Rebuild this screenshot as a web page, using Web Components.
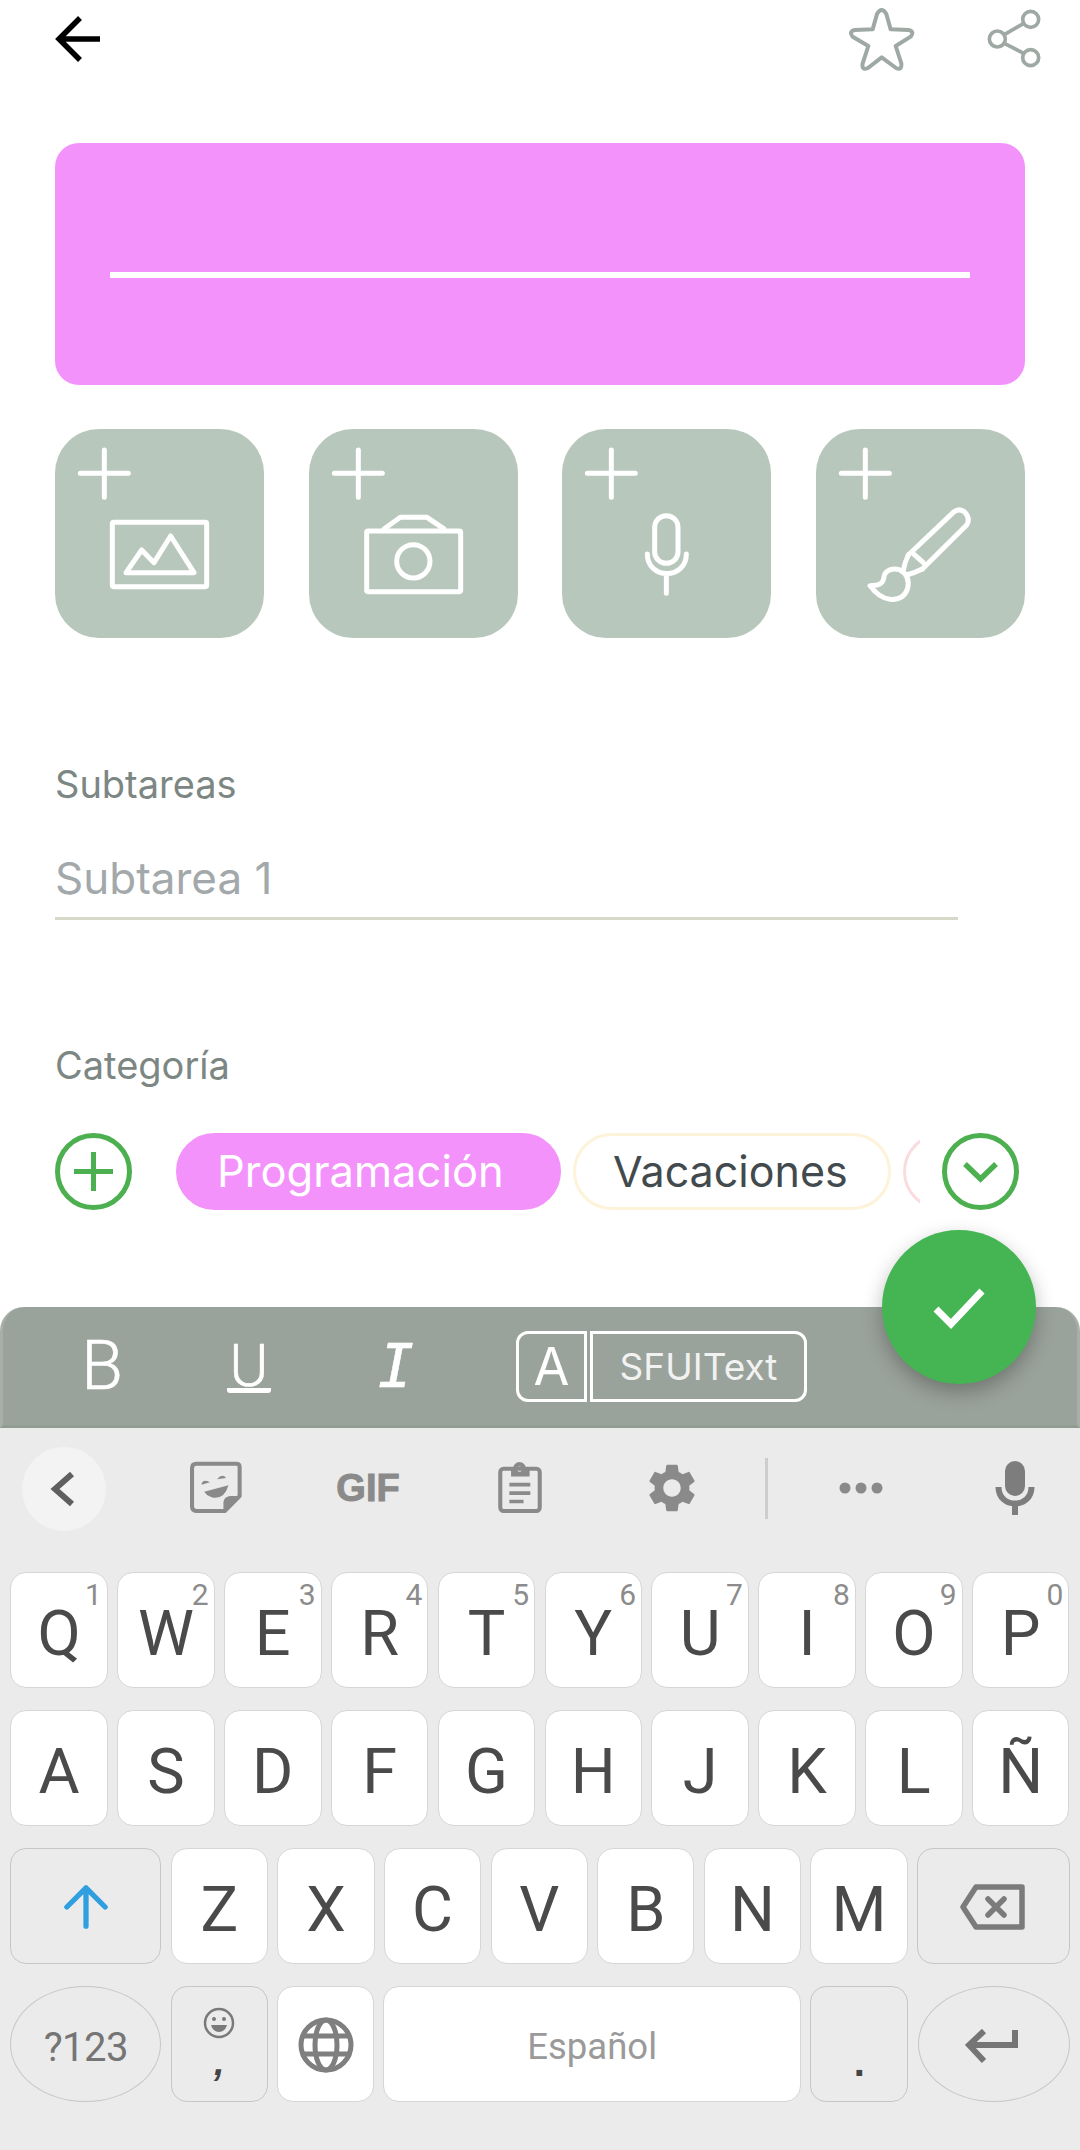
<!DOCTYPE html>
<html lang="es">
<head>
<meta charset="utf-8">
<title>Tarea</title>
<style>
	html, body { margin: 0; padding: 0; background: #fff; }
	body { position: relative; width: 1080px; height: 2150px; overflow: hidden; font-family: Inter, "Liberation Sans", sans-serif; }
</style>
</head>
<body>
<app-bar></app-bar>
<title-card></title-card>
<media-row>
	<media-tile kind="image"></media-tile>
	<media-tile kind="camera"></media-tile>
	<media-tile kind="mic"></media-tile>
	<media-tile kind="brush"></media-tile>
</media-row>
<form-label style="margin-top:124px">Subtareas</form-label>
<sub-field>Subtarea 1</sub-field>
<form-label style="margin-top:123px">Categoría</form-label>
<category-row>
	<cat-chip selected style="width:385px">Programación</cat-chip>
	<cat-chip tone="#fdf3d9" style="width:317.5px;padding-left:37px;font-size:43px">Vacaciones</cat-chip>
	<cat-chip tone="#fadcdf" style="width:200px"></cat-chip>
</category-row>
<format-bar></format-bar>
<done-fab></done-fab>
<kb-tools></kb-tools>
<kb-keys></kb-keys>

<script>
class AppBar extends HTMLElement {
	constructor() {
		super()
		this.root = this.attachShadow({ mode: 'open' })
		this.root.innerHTML = `
			<style>
			:host { display: flex; height: 138px; padding: 5px 35px 0 50px; align-items: flex-start; }
			svg { display: block; fill: none; }
			.star { margin-left: auto; margin-right: 70px; }
			</style>
			<svg width="60" height="70" viewBox="0 0 60 70" stroke="#000" stroke-width="5.5">
				<path d="M30 13 L9 34 L30 55 M9 34 H50"/>
			</svg>
			<svg class="star" width="70" height="70" viewBox="15 15 210 210" stroke="#9fa9a4" stroke-width="12" stroke-linejoin="round">
				<path d="M111 42 Q125 18 139 42 L152 88 L205 90 Q225 94 212 110 L167 138 L184 190 Q186 212 168 204 L125 172 L84 204 Q64 212 68 190 L85 138 L38 110 Q25 94 45 90 L98 88 Z"/>
			</svg>
			<svg width="60" height="70" viewBox="435 15 180 210" stroke="#9fa9a4" stroke-width="11">
				<circle cx="572" cy="58" r="24"/>
				<circle cx="472" cy="117" r="24"/>
				<circle cx="572" cy="173" r="24"/>
				<path d="M493 104 L551 70 M493 130 L551 160"/>
			</svg>
		`
	}
}

class TitleCard extends HTMLElement {
	constructor() {
		super()
		this.root = this.attachShadow({ mode: 'open' })
		this.root.innerHTML = `
			<style>
			:host { display: flex; align-items: center; margin: 0 55px; height: 242px; padding: 0 55px; box-sizing: border-box; background: #f492fb; border-radius: 24px; }
			div { flex: 1; height: 6px; margin-top: 22px; background: #fff; }
			</style>
			<div></div>
		`
	}
}

class MediaRow extends HTMLElement {
	constructor() {
		super()
		this.root = this.attachShadow({ mode: 'open' })
		this.root.innerHTML = `
			<style>
			:host { display: flex; justify-content: space-between; margin: 44px 55px 0; }
			</style>
			<slot></slot>
		`
	}
}

// artwork is in the coordinates of the zoomed crops, the viewBox picks out the tile
const tileArt = {
	image: { box: '45 27 627 627', plus: 193, art: `
		<rect x="217" y="307" width="283" height="193" rx="4"/>
		<path d="M258 458 L305 390 L342 428 L392 348 L462 458 Z"/>` },
	camera: { box: '806 27 627 627', plus: 954, art: `
		<rect x="979" y="333" width="282" height="182" rx="4"/>
		<path d="M1032 326 L1080 292 H1160 L1210 326"/>
		<circle cx="1119" cy="424" r="50"/>` },
	mic: { box: '67 27 627 627', plus: 215, art: `
		<rect x="345" y="287" width="70" height="143" rx="35"/>
		<path d="M323 402 C323 480 440 480 440 402 M380 462 V520"/>` },
	brush: { box: '828 27 627 627', plus: 976, art: `
		<path d="M1105 405 L1240 277 Q1258 262 1275 277 Q1292 297 1280 315 L1147 447"/>
		<path d="M1105 405 Q1095 425 1090 450 M1147 447 Q1125 458 1100 465 M1122 403 L1150 428"/>
		<path d="M990 497 C1010 497 1030 495 1032 470 C1035 450 1060 442 1080 450 C1100 460 1108 480 1103 505 C1095 530 1075 540 1050 538 C1025 535 1005 518 990 497 Z"/>` }
}

class MediaTile extends HTMLElement {
	constructor() {
		super()
		this.root = this.attachShadow({ mode: 'open' })
		const t = tileArt[this.getAttribute('kind')]
		this.root.innerHTML = `
			<style>
			:host { display: block; width: 209px; height: 209px; background: #b8c7bc; border-radius: 44px; }
			svg { display: block; fill: none; stroke: #fff; stroke-width: 15; stroke-linecap: round; stroke-linejoin: round; }
			</style>
			<svg width="209" height="209" viewBox="${t.box}">
				<path d="M${t.plus} 90 V232 M${t.plus - 72} 160 H${t.plus + 72}"/>
				${t.art}
			</svg>
		`
	}
}

class FormLabel extends HTMLElement {
	constructor() {
		super()
		this.root = this.attachShadow({ mode: 'open' })
		this.root.innerHTML = `
			<style>
			:host { display: block; margin-left: 55px; font: 400 38px/44px Inter, "Liberation Sans", sans-serif; color: #7c8682; }
			</style>
			<slot></slot>
		`
	}
}

class SubField extends HTMLElement {
	constructor() {
		super()
		this.root = this.attachShadow({ mode: 'open' })
		this.root.innerHTML = `
			<style>
			:host { display: block; margin: 47px 122px 0 55px; padding-bottom: 14px; border-bottom: 3px solid #d6d8c8; font: 400 44px/50px Inter, "Liberation Sans", sans-serif; color: #a3a8aa; }
			</style>
			<slot></slot>
		`
	}
}

class CategoryRow extends HTMLElement {
	constructor() {
		super()
		this.root = this.attachShadow({ mode: 'open' })
		this.root.innerHTML = `
			<style>
			:host { display: flex; align-items: center; margin: 46px 61px 0 55px; height: 77px; }
			svg { display: block; flex: none; fill: none; stroke: #4caf50; stroke-width: 5; }
			.list { flex: 1; display: flex; gap: 12px; margin: 0 22px 0 44px; overflow: hidden; }
			</style>
			<svg width="77" height="77" viewBox="0 0 77 77">
				<circle cx="38.5" cy="38.5" r="36"/>
				<path d="M38.5 19 V58 M19 38.5 H58"/>
			</svg>
			<div class="list"><slot></slot></div>
			<svg width="77" height="77" viewBox="0 0 77 77">
				<circle cx="38.5" cy="38.5" r="36"/>
				<path d="M23 31 L38.5 46 L54 31" stroke-width="5.5"/>
			</svg>
		`
	}
}

class CatChip extends HTMLElement {
	constructor() {
		super()
		this.root = this.attachShadow({ mode: 'open' })
		const tone = this.getAttribute('tone') || '#f492fb'
		this.root.innerHTML = `
			<style>
			:host { display: flex; flex: none; align-items: center; height: 77px; box-sizing: border-box; padding: 0 0 0 38px; border: 3px solid ${tone}; border-radius: 39px; font: 400 43.5px/1 Inter, "Liberation Sans", sans-serif; color: #424a4d; white-space: nowrap; }
			:host([selected]) { background: #f492fb; color: #fff; }
			</style>
			<slot></slot>
		`
	}
}

class FormatBar extends HTMLElement {
	constructor() {
		super()
		this.root = this.attachShadow({ mode: 'open' })
		this.root.innerHTML = `
			<style>
			:host { display: flex; align-items: center; margin-top: 97px; height: 121px; box-sizing: border-box; padding: 0 0 0 59px; background: #9aa39b; border: 3px solid #a7afa8; border-top: 0; border-bottom-color: #919c93; border-radius: 24px 24px 0 0; color: #fff; font-family: Inter, "Liberation Sans", sans-serif; }
			.fmt { width: 80px; text-align: center; margin-right: 67px; font: 300 68px/80px Roboto, "Liberation Sans", sans-serif; -webkit-text-stroke: .6px #fff; }
			.u { font-size: 59px; }
			.u span { display: inline-block; border-bottom: 5px solid #fff; border-radius: 3px; padding: 0 3px; line-height: 44px; }
			.i { font: oblique 400 60px/80px "DejaVu Sans Mono", monospace; }
			.a, .name { height: 71px; box-sizing: border-box; border: 3px solid #fff; display: flex; align-items: center; justify-content: center; }
			.a { width: 71px; margin-left: 13px; border-radius: 12px 0 0 12px; font-size: 52px; }
			.name { width: 217px; margin-left: 3px; border-radius: 0 12px 12px 0; font-size: 37px; color: #f2f2f2; }
			</style>
			<div class="fmt">B</div>
			<div class="fmt u"><span>U</span></div>
			<div class="fmt i">I</div>
			<div class="a">A</div>
			<div class="name">SFUIText</div>
		`
	}
}

class DoneFab extends HTMLElement {
	constructor() {
		super()
		this.root = this.attachShadow({ mode: 'open' })
		this.root.innerHTML = `
			<style>
			:host { position: absolute; left: 882px; top: 1230px; width: 154px; height: 154px; border-radius: 50%; background: #45b553; box-shadow: 0 8px 20px rgba(0,0,0,.28); display: flex; align-items: center; justify-content: center; }
			svg { display: block; fill: none; stroke: #fff; stroke-width: 7; }
			</style>
			<svg width="154" height="154" viewBox="0 0 154 154">
				<path d="M54 79 L69 94 L100 61"/>
			</svg>
		`
	}
}

class KbTools extends HTMLElement {
	constructor() {
		super()
		this.root = this.attachShadow({ mode: 'open' })
		this.root.innerHTML = `
			<style>
			:host { display: flex; align-items: center; height: 144px; padding: 0 0 24px 22px; background: #ebebeb; box-sizing: border-box; }
			svg { display: block; flex: none; }
			.back { width: 84px; height: 84px; border-radius: 50%; background: #f3f3f3; flex: none; margin-top: 1px; }
			.tool { width: 80px; flex: none; display: flex; justify-content: center; }
			.gif { font: 700 38px/1 "Liberation Sans", sans-serif; color: #8a8a8a; -webkit-text-stroke: 1px #8a8a8a; }
			.sep { width: 3px; height: 61px; background: #cdcdcd; flex: none; margin: 1px 53px 0; }
			</style>
			<div class="back">
				<svg width="84" height="84" viewBox="0 0 84 84" fill="none" stroke="#5f5f5f" stroke-width="6">
					<path d="M50 27 L33 42 L50 57"/>
				</svg>
			</div>
			<div class="tool" style="margin-left:70px">
				<svg width="54" height="54" viewBox="30 38 160 160" fill="none" stroke="#8a8a8a" stroke-width="12" stroke-linejoin="round">
					<path d="M52 46 H170 Q180 46 180 56 V142 L136 186 H52 Q39 186 39 173 V59 Q39 46 52 46 Z"/>
					<path d="M134 186 V160 Q136 146 152 144 H180 Z" fill="#8a8a8a" stroke-width="4"/>
					<path d="M67 108 Q70 90 92 101 Z M113 92 Q128 74 140 88 Z M75 129 L147 110 Q135 152 100 146 Q84 142 75 129 Z" fill="#8a8a8a" stroke="none"/>
				</svg>
			</div>
			<div class="tool gif" style="margin-left:72px">GIF</div>
			<div class="tool" style="margin-left:72px">
				<svg width="46" height="54" viewBox="954 38 135 160" fill="none" stroke="#8a8a8a" stroke-width="12" stroke-linejoin="round">
					<rect x="963" y="61" width="117" height="125" rx="10"/>
					<path d="M995 60 H1001 A19 19 0 0 1 1039 60 H1050 V84 H995 Z M1020 54 a8 8 0 1 0 .01 0 Z" fill="#8a8a8a" fill-rule="evenodd" stroke="none"/>
					<path d="M990 108 H1052 M990 133 H1052 M990 158 H1032" stroke-width="11"/>
				</svg>
			</div>
			<div class="tool" style="margin-left:72px">
				<svg width="58" height="58" viewBox="0 0 24 24" fill="#8a8a8a">
					<path d="M19.14 12.94c.04-.3.06-.61.06-.94 0-.32-.02-.64-.07-.94l2.03-1.58c.18-.14.23-.41.12-.61l-1.92-3.32c-.12-.22-.37-.29-.59-.22l-2.39.96c-.5-.38-1.03-.7-1.62-.94l-.36-2.54c-.04-.24-.24-.41-.48-.41h-3.84c-.24 0-.43.17-.47.41l-.36 2.54c-.59.24-1.13.57-1.62.94l-2.39-.96c-.22-.08-.47 0-.59.22L2.74 8.87c-.12.21-.08.47.12.61l2.03 1.58c-.05.3-.09.63-.09.94s.02.64.07.94l-2.03 1.58c-.18.14-.23.41-.12.61l1.92 3.32c.12.22.37.29.59.22l2.39-.96c.5.38 1.03.7 1.62.94l.36 2.54c.05.24.24.41.48.41h3.84c.24 0 .44-.17.47-.41l.36-2.54c.59-.24 1.13-.56 1.62-.94l2.39.96c.22.08.47 0 .59-.22l1.92-3.32c.12-.22.07-.47-.12-.61l-2.01-1.58zM12 15.6c-1.98 0-3.6-1.62-3.6-3.6s1.62-3.6 3.6-3.6 3.6 1.62 3.6 3.6-1.62 3.6-3.6 3.6z"/>
				</svg>
			</div>
			<div class="sep"></div>
			<div class="tool">
				<svg width="44" height="12" viewBox="0 0 44 12" fill="#8a8a8a">
					<circle cx="6" cy="6" r="5.5"/><circle cx="22" cy="6" r="5.5"/><circle cx="38" cy="6" r="5.5"/>
				</svg>
			</div>
			<div class="tool" style="margin-left:74px">
				<svg width="40" height="54" viewBox="0 0 40 54" fill="none" stroke="#7d7d7d" stroke-width="6">
					<rect x="10" y="0" width="20" height="35" rx="10" fill="#7d7d7d" stroke="none"/>
					<path d="M3.5 26 C3.5 48 36.5 48 36.5 26 M20 42 V54"/>
				</svg>
			</div>
		`
	}
}

class KbKey extends HTMLElement {
	constructor() {
		super()
		this.root = this.attachShadow({ mode: 'open' })
		const hint = this.getAttribute('hint')
		this.root.innerHTML = `
			<style>
			:host { position: relative; flex: 1 1 0; min-width: 0; height: 116px; box-sizing: border-box; display: flex; align-items: center; justify-content: center; background: #fff; border: 1px solid #d6d6d6; border-radius: 16px; font: 400 63px/1 Roboto, "Liberation Sans", sans-serif; color: #4a4a4a; }
			:host([grey]) { background: #ebebeb; border-color: #c6c6c6; }
			:host([pill]) { border-radius: 50% / 50%; }
			:host([side]) { flex: 0 0 151.2px; }
			:host([fix]) { flex: 0 0 97.3px; }
			.hint { position: absolute; top: 7px; right: 5px; font: 400 30px/1 Roboto, "Liberation Sans", sans-serif; color: #8c8c8c; }
			.txt { padding-top: 6px; }
			</style>
			${hint ? `<span class="hint">${hint}</span>` : ''}
			<span class="txt"><slot></slot></span>
		`
	}
}

class KbKeys extends HTMLElement {
	constructor() {
		super()
		this.root = this.attachShadow({ mode: 'open' })
		const letters = (s, fix) => s.split('').map(c => `<kb-key${fix ? ' fix' : ''}>${c}</kb-key>`).join('')
		const hints = '1234567890'
		const top = 'QWERTYUIOP'.split('').map((c, i) => `<kb-key hint="${hints[i]}">${c}</kb-key>`).join('')
		this.root.innerHTML = `
			<style>
			:host { display: flex; flex-direction: column; gap: 22px; height: 578px; box-sizing: border-box; padding: 0 10.5px 0 10.3px; background: #ebebeb; }
			.row { display: flex; gap: 9.3px; }
			svg { display: block; }
			.up { margin-top: -4px; }
			.stack { display: flex; flex-direction: column; align-items: center; margin-top: -10px; }
			.comma { font: 700 38px/30px "Liberation Sans", sans-serif; color: #444; margin-top: 8px; font-style: italic; }
			.dot { font: 700 40px/1 "Liberation Sans", sans-serif; color: #444; margin-top: 30px; display: block; }
			.sym { font-size: 40px; font-weight: 400; letter-spacing: -.5px; color: #757575; display: block; margin-top: 2px; }
			.lang { font-size: 36.5px; font-weight: 400; color: #9a9a9a; display: block; margin-top: 1px; }
			.enter { margin-left: -4px; }
			</style>
			<div class="row">${top}</div>
			<div class="row">${letters('ASDFGHJKLÑ')}</div>
			<div class="row">
				<kb-key side grey>
					<svg class="up" width="44" height="44" viewBox="0 0 46 46" fill="none" stroke="#2f9fe0" stroke-width="5.5" stroke-linecap="round" stroke-linejoin="round">
						<path d="M3 23 L23 3 L43 23 M23 3 V43"/>
					</svg>
				</kb-key>
				${letters('ZXCVBNM', true)}
				<kb-key grey>
					<svg class="up" width="66" height="48" viewBox="0 0 66 48" fill="none" stroke="#7b7b7b" stroke-width="5.5">
						<path d="M16 4 H62 V44 H16 L3 24 Z" stroke-linejoin="round"/>
						<path d="M28 16 L44 32 M44 16 L28 32" stroke-linecap="round"/>
					</svg>
				</kb-key>
			</div>
			<div class="row">
				<kb-key side grey pill><span class="sym">?123</span></kb-key>
				<kb-key grey style="flex:0 0 97px">
					<div class="stack">
						<svg width="32" height="32" viewBox="0 0 32 32" fill="none" stroke="#7a7a7a" stroke-width="2.5">
							<circle cx="16" cy="16" r="14"/>
							<circle cx="11" cy="12" r="2" fill="#7a7a7a" stroke="none"/>
							<circle cx="21" cy="12" r="2" fill="#7a7a7a" stroke="none"/>
							<path d="M8 18 H24 Q22 25 16 25 Q10 25 8 18 Z" fill="#7a7a7a" stroke="none"/>
						</svg>
						<span class="comma">,</span>
					</div>
				</kb-key>
				<kb-key style="flex:0 0 97px">
					<svg class="up" width="56" height="56" viewBox="0 0 56 56" fill="none" stroke="#7f7f7f" stroke-width="5">
						<circle cx="28" cy="28" r="25"/>
						<ellipse cx="28" cy="28" rx="11" ry="25"/>
						<path d="M5 19 H51 M5 37 H51"/>
					</svg>
				</kb-key>
				<kb-key><span class="lang">Español</span></kb-key>
				<kb-key grey style="flex:0 0 98px"><span class="dot">.</span></kb-key>
				<kb-key grey pill style="flex:0 0 152px">
					<svg class="enter" width="54" height="36" viewBox="0 0 54 36" fill="none" stroke="#757575" stroke-width="6">
						<path d="M50 1 V16 H4 M19 2 L4 16 L19 32" />
					</svg>
				</kb-key>
			</div>
		`
	}
}

customElements.define('app-bar', AppBar)
customElements.define('title-card', TitleCard)
customElements.define('media-row', MediaRow)
customElements.define('media-tile', MediaTile)
customElements.define('form-label', FormLabel)
customElements.define('sub-field', SubField)
customElements.define('category-row', CategoryRow)
customElements.define('cat-chip', CatChip)
customElements.define('format-bar', FormatBar)
customElements.define('done-fab', DoneFab)
customElements.define('kb-tools', KbTools)
customElements.define('kb-key', KbKey)
customElements.define('kb-keys', KbKeys)
</script>
</body>
</html>
